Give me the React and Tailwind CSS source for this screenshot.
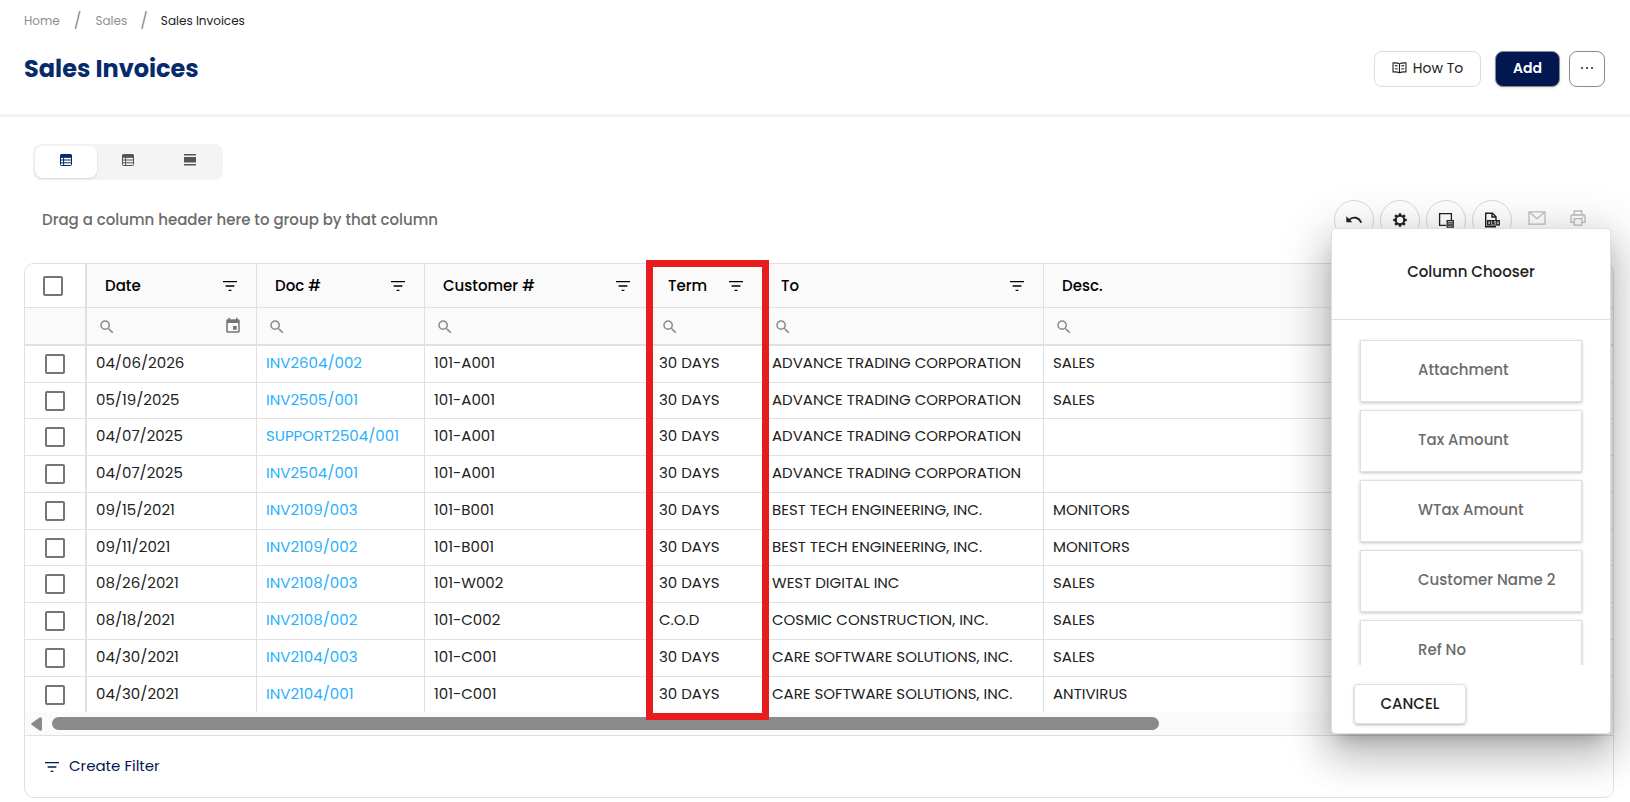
import React, { useState } from 'react';
import { MdSearch, MdEvent } from 'react-icons/md';

const columns = [
  { key: 'date', label: 'Date', filter: true, calendar: true },
  { key: 'doc', label: 'Doc #', filter: true },
  { key: 'customer', label: 'Customer #', filter: true },
  { key: 'term', label: 'Term', filter: true },
  { key: 'to', label: 'To', filter: true },
  { key: 'desc', label: 'Desc.', filter: false }
];

const invoices = [
  { date: '04/06/2026', doc: 'INV2604/002', customer: '101-A001', term: '30 DAYS', to: 'ADVANCE TRADING CORPORATION', desc: 'SALES' },
  { date: '05/19/2025', doc: 'INV2505/001', customer: '101-A001', term: '30 DAYS', to: 'ADVANCE TRADING CORPORATION', desc: 'SALES' },
  { date: '04/07/2025', doc: 'SUPPORT2504/001', customer: '101-A001', term: '30 DAYS', to: 'ADVANCE TRADING CORPORATION', desc: '' },
  { date: '04/07/2025', doc: 'INV2504/001', customer: '101-A001', term: '30 DAYS', to: 'ADVANCE TRADING CORPORATION', desc: '' },
  { date: '09/15/2021', doc: 'INV2109/003', customer: '101-B001', term: '30 DAYS', to: 'BEST TECH ENGINEERING, INC.', desc: 'MONITORS' },
  { date: '09/11/2021', doc: 'INV2109/002', customer: '101-B001', term: '30 DAYS', to: 'BEST TECH ENGINEERING, INC.', desc: 'MONITORS' },
  { date: '08/26/2021', doc: 'INV2108/003', customer: '101-W002', term: '30 DAYS', to: 'WEST DIGITAL INC', desc: 'SALES' },
  { date: '08/18/2021', doc: 'INV2108/002', customer: '101-C002', term: 'C.O.D', to: 'COSMIC CONSTRUCTION, INC.', desc: 'SALES' },
  { date: '04/30/2021', doc: 'INV2104/003', customer: '101-C001', term: '30 DAYS', to: 'CARE SOFTWARE SOLUTIONS, INC.', desc: 'SALES' },
  { date: '04/30/2021', doc: 'INV2104/001', customer: '101-C001', term: '30 DAYS', to: 'CARE SOFTWARE SOLUTIONS, INC.', desc: 'ANTIVIRUS' }
];

const hiddenColumns = ['Attachment', 'Tax Amount', 'WTax Amount', 'Customer Name 2', 'Ref No'];

function FilterIcon() {
  return (
    <svg viewBox="0 0 18 18" className="w-[18px] h-[18px]" fill="none" stroke="currentColor" strokeWidth="1.3">
      <path d="M2 4.600h14M4.600 9h8.800M7.600 13.300h2.800" />
    </svg>
  );
}

function TableIcon() {
  return (
    <svg viewBox="0 0 12 12" className="w-3 h-3" fill="none" stroke="currentColor">
      <rect x="0.5" y="0.5" width="11" height="11" rx="0.8" />
      <path d="M0.5 0.5h11v3h-11z" fill="currentColor" stroke="none" />
      <path d="M0.5 3.2h11M0.5 6h11M0.5 8.8h11M3.6 3v8.5" />
    </svg>
  );
}

function BandIcon() {
  return (
    <svg viewBox="0 0 12 12" className="w-3 h-3" fill="currentColor">
      <path d="M0 0h12v1.6H0zM0 3h12v5.6H0zM0 10h12v1.6H0z" />
    </svg>
  );
}

function BookIcon() {
  return (
    <svg viewBox="0 0 16 13" className="w-[15px] h-3" fill="none" stroke="currentColor" strokeWidth="1.2">
      <path d="M8 2C6.500 1 3.500.8 1 1v9.800c2.500-.2 5.500 0 7 1 1.500-1 4.500-1.200 7-1V1c-2.500-.2-5.500 0-7 1zM8 2v9.800" />
      <path d="M3 4c1-.1 2 0 3 .3M3 7.300c1-.1 2 0 3 .3M13 4c-1-.1-2 0-3 .3M13 7.300c-1-.1-2 0-3 .3" />
    </svg>
  );
}

function UndoIcon() {
  return (
    <svg viewBox="0 0 16 16" className="w-4 h-4" fill="none" stroke="currentColor" strokeWidth="1.8">
      <path d="M3 8.200C6.500 4.200 13 4.800 15.200 10.800" />
      <path d="M.3 4.200v6h6z" fill="currentColor" stroke="none" />
    </svg>
  );
}

function GearIcon() {
  return (
    <svg viewBox="0 0 16 16" className="w-4 h-4" fill="none" stroke="currentColor">
      <circle cx="8" cy="8" r="4.200" strokeWidth="2" />
      <path
        d="M8 1.200v2.500M8 12.300v2.500M1.200 8h2.500M12.300 8h2.500M3.200 3.200l1.700 1.700M11.100 11.100l1.700 1.700M3.200 12.800l1.700-1.700M11.100 4.900l1.700-1.700"
        strokeWidth="2.600"
      />
    </svg>
  );
}

function ChooserIcon() {
  return (
    <svg viewBox="0 0 16 16" className="w-4 h-4" fill="none" stroke="currentColor" strokeWidth="1.300">
      <path d="M8 13.400H1.600V1.600h11.800V8" />
      <path d="M9.200 8.600h6v6.600h-6z" />
      <path d="M10 10.800h4.600M10 13h4.600" />
    </svg>
  );
}

function XlsxIcon() {
  return (
    <svg viewBox="0 0 16 16" className="w-4 h-4" fill="none" stroke="currentColor" strokeWidth="1.400">
      <path d="M12 14.800H1.700V1.200h6.800L12 4.700V8M8 1.200V5h4" />
      <path d="M3 8h13v5.600H3z" fill="currentColor" stroke="none" />
      <path d="M4.200 9.300l2 3M6.200 9.300l-2 3M7.600 9v3.300h1.600M12 9.400h-1.700v1.300h1.500v1.500h-1.700M13.200 9.300l1.800 3M15 9.300l-1.800 3" stroke="#fff" strokeWidth="0.700" />
    </svg>
  );
}

function MailIcon() {
  return (
    <svg viewBox="0 0 18 14" className="w-[18px] h-[14px]" fill="none" stroke="currentColor" strokeWidth="1.200">
      <path d="M1 .8h16v12.400H1zM1.200 1L9 7.800 16.800 1" />
    </svg>
  );
}

function PrintIcon() {
  return (
    <svg viewBox="0 0 16 16" className="w-4 h-4" fill="none" stroke="currentColor" strokeWidth="1.300">
      <path d="M4.200 5V1h7.600v4M4 12.300H1V6.200Q1 5 2.200 5h11.600Q15 5 15 6.200v6.100h-3" />
      <path d="M4.200 8.600h7.600v6.500H4.200zM12.500 7h1" />
    </svg>
  );
}

const tools = [
  { label: 'Reset layout', Icon: UndoIcon },
  { label: 'Settings', Icon: GearIcon },
  { label: 'Column chooser', Icon: ChooserIcon },
  { label: 'Export to XLSX', Icon: XlsxIcon }
];

const views = [
  { label: 'Table', Icon: TableIcon },
  { label: 'Detail table', Icon: TableIcon },
  { label: 'Band', Icon: BandIcon }
];

const checkboxClass = 'block w-5 h-5 appearance-none border-2 border-[#757575] rounded-[2px] bg-white checked:bg-[#001750]';

export default function App() {
  const [view, setView] = useState(0);
  const [chooserOpen, setChooserOpen] = useState(true);

  return (
    <div className="relative min-h-screen overflow-hidden bg-white pb-1 font-[Poppins,Inter,sans-serif] text-[#212121]">
      <header className="h-[117px] border-b-[3px] border-[#f2f2f2] pl-6 pr-[25px] pt-3">
        <nav className="flex items-center h-[18px] text-[12px] text-[#8f8f8f]">
          <a href="#home">Home</a>
          <span className="px-3.5 text-[16px]">/</span>
          <a href="#sales">Sales</a>
          <span className="px-[13px] text-[16px]">/</span>
          <span className="text-[#212121]">Sales Invoices</span>
        </nav>
        <div className="flex items-center justify-between mt-[21px]">
          <h1 className="text-2xl font-bold text-[#062a6b]">Sales Invoices</h1>
          <div className="flex items-center">
            <button className="flex items-center justify-center gap-1.5 w-[107px] h-9 border border-[#dcdcdc] rounded-lg pb-0.5 text-[14px] mr-3.5">
              <BookIcon />
              How To
            </button>
            <button className="w-[65px] h-9 border border-[#8a8a8a] rounded-lg bg-[#001750] pb-0.5 text-white text-[14px] font-semibold mr-[9px] shadow-sm">
              Add
            </button>
            <button aria-label="More" className="flex items-center justify-center w-9 h-9 border border-[#8a8a8a] rounded-lg pb-0.5">
              <svg viewBox="0 0 14 4" className="w-3.5 h-1" fill="currentColor">
                <circle cx="2" cy="2" r="1" />
                <circle cx="7" cy="2" r="1" />
                <circle cx="12" cy="2" r="1" />
              </svg>
            </button>
          </div>
        </div>
      </header>

      <main className="pl-6 pr-4 pt-[27px]">
        <div className="inline-flex align-top ml-[9px] h-9 p-0.5 rounded-lg bg-[#f4f4f4]">
          {views.map(({ label, Icon }, index) => (
            <button
              key={label}
              aria-label={label}
              onClick={() => setView(index)}
              className={
                view === index
                  ? 'flex items-center justify-center w-[62px] rounded-lg bg-white text-[#062a6b] shadow-sm pb-1'
                  : 'flex items-center justify-center w-[62px] rounded-lg text-[#555] pb-1'
              }
            >
              <Icon />
            </button>
          ))}
        </div>

        <div className="flex items-center justify-between mt-5 h-10 pl-[18px] pr-7">
          <span className="text-[15px] font-medium text-[#6b6b6b]">Drag a column header here to group by that column</span>
          <div className="flex items-center gap-1.5">
            {tools.map(({ label, Icon }) => (
              <button
                key={label}
                aria-label={label}
                onClick={() => label === 'Column chooser' && setChooserOpen(true)}
                className="flex items-center justify-center w-10 h-10 border border-[#d9d9d9] rounded-full"
              >
                <Icon />
              </button>
            ))}
            <button aria-label="Email" disabled className="ml-2.5 pb-1 text-[#bdbdbd]">
              <MailIcon />
            </button>
            <button aria-label="Print" disabled className="ml-[18px] pb-1 text-[#bdbdbd]">
              <PrintIcon />
            </button>
          </div>
        </div>

        <div className="relative mt-[23px]">
          <div className="border border-[#e0e0e0] rounded-[10px] overflow-hidden">
            <table className="w-full table-fixed border-separate border-spacing-0 text-left text-[15px] leading-5">
              <colgroup>
                <col className="w-[62px]" />
                <col className="w-[170px]" />
                <col className="w-[168px]" />
                <col className="w-[225px]" />
                <col className="w-[113px]" />
                <col className="w-[281px]" />
                <col />
              </colgroup>
              <thead>
                <tr className="h-11">
                  <th className="border-b border-r-2 border-[#e0e0e0] bg-white pl-[18px]">
                    <input type="checkbox" aria-label="Select all" className={checkboxClass} />
                  </th>
                  {columns.map((column) => (
                    <th key={column.key} className="border-b border-r last:border-r-0 border-[#e0e0e0] bg-[#fafafa] pl-[18px] pr-[17px] font-medium text-black">
                      <div className="flex items-center justify-between">
                        {column.label}
                        {column.filter && (
                          <button aria-label={`Filter ${column.label}`}>
                            <FilterIcon />
                          </button>
                        )}
                      </div>
                    </th>
                  ))}
                </tr>
                <tr className="h-[38px]">
                  <td className="border-b-2 border-r-2 border-[#e0e0e0] bg-[#fafafa]" />
                  {columns.map((column) => (
                    <td key={column.key} className="border-b-2 border-r last:border-r-0 border-[#e0e0e0] bg-[#fafafa] pl-[11px] pr-3.5">
                      <label className="flex items-center">
                        <MdSearch className="w-[18px] h-[18px] shrink-0 mt-0.5 text-[#8a8a8a]" />
                        <input type="text" aria-label={`Search ${column.label}`} className="min-w-0 flex-1 h-5 bg-transparent outline-none" />
                        {column.calendar && <MdEvent className="w-[18px] h-[18px] shrink-0 text-[#757575]" />}
                      </label>
                    </td>
                  ))}
                </tr>
              </thead>
              <tbody>
                {invoices.map((invoice) => (
                  <tr key={invoice.doc} className="group h-[37px] nth-[4n+2]:h-9 last:h-[35px]!">
                    <td className="border-b group-last:border-b-0 border-r-2 border-[#e0e0e0] pl-5">
                      <input type="checkbox" aria-label={`Select ${invoice.doc}`} className={checkboxClass} />
                    </td>
                    {columns.map((column) => (
                      <td
                        key={column.key}
                        className="border-b group-last:border-b-0 border-r last:border-r-0 border-[#e0e0e0] pl-[9px] pb-0.5 whitespace-nowrap"
                      >
                        {column.key === 'doc' ? (
                          <a href={`#${invoice.doc}`} className="text-[#29b0fb]">{invoice.doc}</a>
                        ) : (
                          invoice[column.key]
                        )}
                      </td>
                    ))}
                  </tr>
                ))}
              </tbody>
            </table>

            <div className="flex items-center gap-2.5 h-[23px] pl-1.5 bg-[#fbfbfb]">
              <svg viewBox="0 0 11 14" className="w-[11px] h-3.5" fill="#8a8a8a">
                <path d="M0.500 6.200Q0 7 .5 7.800L8.500 13.600Q11 14.500 11 12V2Q11-.5 8.500.4z" />
              </svg>
              <div className="w-[70%] h-[13px] rounded-full bg-[#8a8a8a]" />
            </div>

            <div className="flex items-center h-[62px] border-t border-[#e0e0e0] pl-[18px]">
              <button className="flex items-center gap-2 text-[15px] text-[#001750]">
                <FilterIcon />
                Create Filter
              </button>
            </div>
          </div>

          {/* highlight around the Term column */}
          <div className="absolute -top-[3px] left-[622px] w-[123px] h-[460px] border-[7px] border-[#e81c1c] pointer-events-none" />
        </div>
      </main>

      {chooserOpen && (
        <div
          role="dialog"
          aria-label="Column Chooser"
          className="absolute top-[228px] right-[19px] w-[280px] h-[506px] flex flex-col border border-[#e0e0e0] rounded bg-white shadow-[0_11px_15px_-7px_rgba(0,0,0,0.2),0_24px_38px_3px_rgba(0,0,0,0.14),0_9px_46px_8px_rgba(0,0,0,0.16)]"
        >
          <h2 className="flex items-center justify-center h-[91px] shrink-0 border-b border-[#e0e0e0] pb-1 text-[15px] font-medium">
            Column Chooser
          </h2>
          <ul className="flex-1 min-h-0 overflow-hidden px-7 pt-5 space-y-2">
            {hiddenColumns.map((name) => (
              <li
                key={name}
                className="flex items-center h-[62px] border border-[#e0e0e0] pl-[57px] pb-0.5 text-[15px] font-medium text-[#6b6b6b] shadow-[0_1px_3px_rgba(0,0,0,0.24)]"
              >
                {name}
              </li>
            ))}
          </ul>
          <div className="shrink-0 pt-[19px] pb-[9px] pl-[22px]">
            <button
              onClick={() => setChooserOpen(false)}
              className="w-[112px] h-10 border border-[#e0e0e0] rounded text-[15px] font-medium shadow-[0_1px_3px_rgba(0,0,0,0.3)]"
            >
              CANCEL
            </button>
          </div>
        </div>
      )}
    </div>
  );
}
